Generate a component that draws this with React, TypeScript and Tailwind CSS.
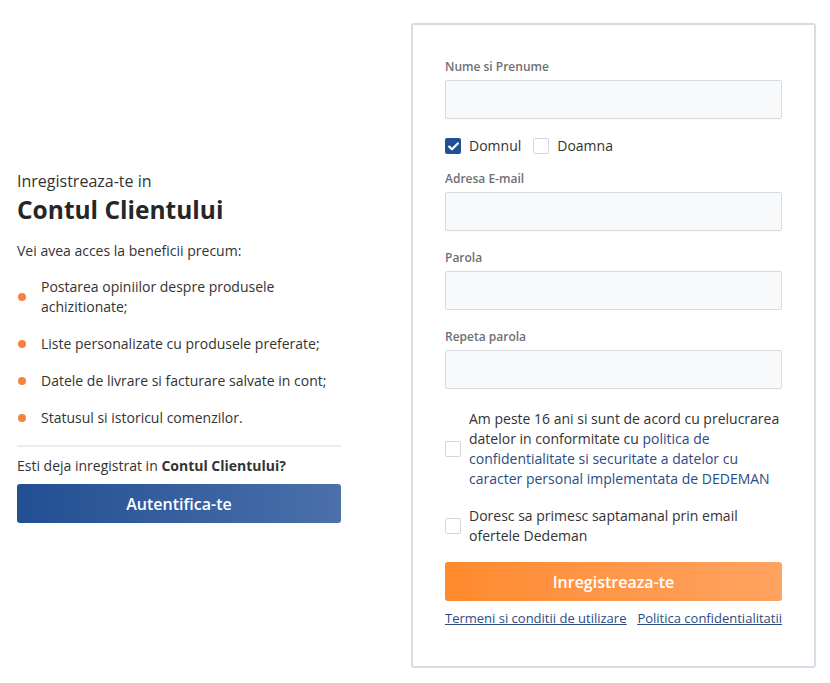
const benefits = [
  "Postarea opiniilor despre produsele achizitionate;",
  "Liste personalizate cu produsele preferate;",
  "Datele de livrare si facturare salvate in cont;",
  "Statusul si istoricul comenzilor.",
];

const CheckBox = ({ checked = false }: { checked?: boolean }) =>
  checked ? (
    <span className="w-4 h-4 shrink-0 rounded-[2px] bg-[#234f96] flex items-center justify-center">
      <svg width="11" height="9" viewBox="0 0 11 9" fill="none">
        <path d="M1.2 4.6 L4 7.3 L9.8 1.4" stroke="white" strokeWidth="2.2" strokeLinecap="round" strokeLinejoin="round" />
      </svg>
    </span>
  ) : (
    <span className="block w-4 h-4 shrink-0 rounded-[2px] border border-[#d3d6db] bg-white" />
  );

const Field = ({ label, className }: { label: string; className: string }) => (
  <div className={className}>
    <div className="text-[12px] leading-4 font-semibold text-[#6e7074] mb-[5px]">{label}</div>
    <div className="h-[39px] rounded-[2px] border border-[#d7dbe1] bg-[#f8f9fb]" />
  </div>
);

const App = () => {
  return (
    <div
      className="w-[830px] h-[683px] bg-white flex items-start pt-[23px] pl-[17px] text-[#333]"
      style={{ fontFamily: '"Open Sans", "Liberation Sans", sans-serif' }}
    >
      {/* left side */}
      <div className="w-[324px] shrink-0 pt-[148px]">
        <div className="text-[16px] leading-5">Inregistreaza-te in</div>
        <h1 className="text-[24.5px] leading-8 font-bold text-[#262626] mt-[3px]">Contul Clientului</h1>
        <p className="text-[14px] leading-5 mt-[15px]">Vei avea acces la beneficii precum:</p>
        <ul className="mt-[16px] flex flex-col gap-[17px]">
          {benefits.map((b) => (
            <li key={b} className="flex items-center text-[14px] leading-5">
              <span className="w-[8px] h-[8px] rounded-full bg-[#f5843a] shrink-0 ml-[1px] mr-[15px]" />
              <span>{b}</span>
            </li>
          ))}
        </ul>
        <div className="h-[2px] bg-[#ececec] mt-[17px]" />
        <p className="text-[14px] leading-5 mt-[9px]">
          Esti deja inregistrat in <span className="font-bold">Contul Clientului?</span>
        </p>
        <button className="mt-[8px] w-full h-[39px] rounded-[3px] bg-linear-to-r from-[#214f93] to-[#4b70aa] text-white text-[16px] font-semibold">
          Autentifica-te
        </button>
      </div>

      {/* right side card */}
      <div className="ml-[70px] w-[405px] h-[645px] shrink-0 border-2 border-[#d6dce4] rounded-[3px] px-[32px] pt-[34px]">
        <Field label="Nume si Prenume" className="" />
        <div className="flex items-center mt-[17px] text-[14px] leading-5">
          <CheckBox checked />
          <span className="ml-[8px]">Domnul</span>
          <div className="ml-[12px] flex">
            <CheckBox />
          </div>
          <span className="ml-[8px]">Doamna</span>
        </div>
        <Field label="Adresa E-mail" className="mt-[15px]" />
        <Field label="Parola" className="mt-[19px]" />
        <Field label="Repeta parola" className="mt-[19px]" />

        <div className="flex items-center mt-[20px] text-[14px] leading-5">
          <CheckBox />
          <p className="ml-[8px]">
            Am peste 16 ani si sunt de acord cu prelucrarea datelor in conformitate cu{" "}
            <span className="text-[#2b4b84]">politica de confidentialitate si securitate a datelor cu caracter personal implementata de DEDEMAN</span>
          </p>
        </div>
        <div className="flex items-center mt-[17px] text-[14px] leading-5">
          <CheckBox />
          <p className="ml-[8px]">
            Doresc sa primesc saptamanal prin email
            <br />
            ofertele Dedeman
          </p>
        </div>

        <button className="mt-[16px] w-full h-[39px] rounded-[3px] bg-linear-to-r from-[#ff8a2c] to-[#ffa360] text-white text-[16px] font-semibold">
          Inregistreaza-te
        </button>
        <div className="flex justify-between mt-[9px] text-[13px] leading-4 text-[#2b4b84] underline">
          <a href="#">Termeni si conditii de utilizare</a>
          <a href="#">Politica confidentialitatii</a>
        </div>
      </div>
    </div>
  );
};

export default App;
